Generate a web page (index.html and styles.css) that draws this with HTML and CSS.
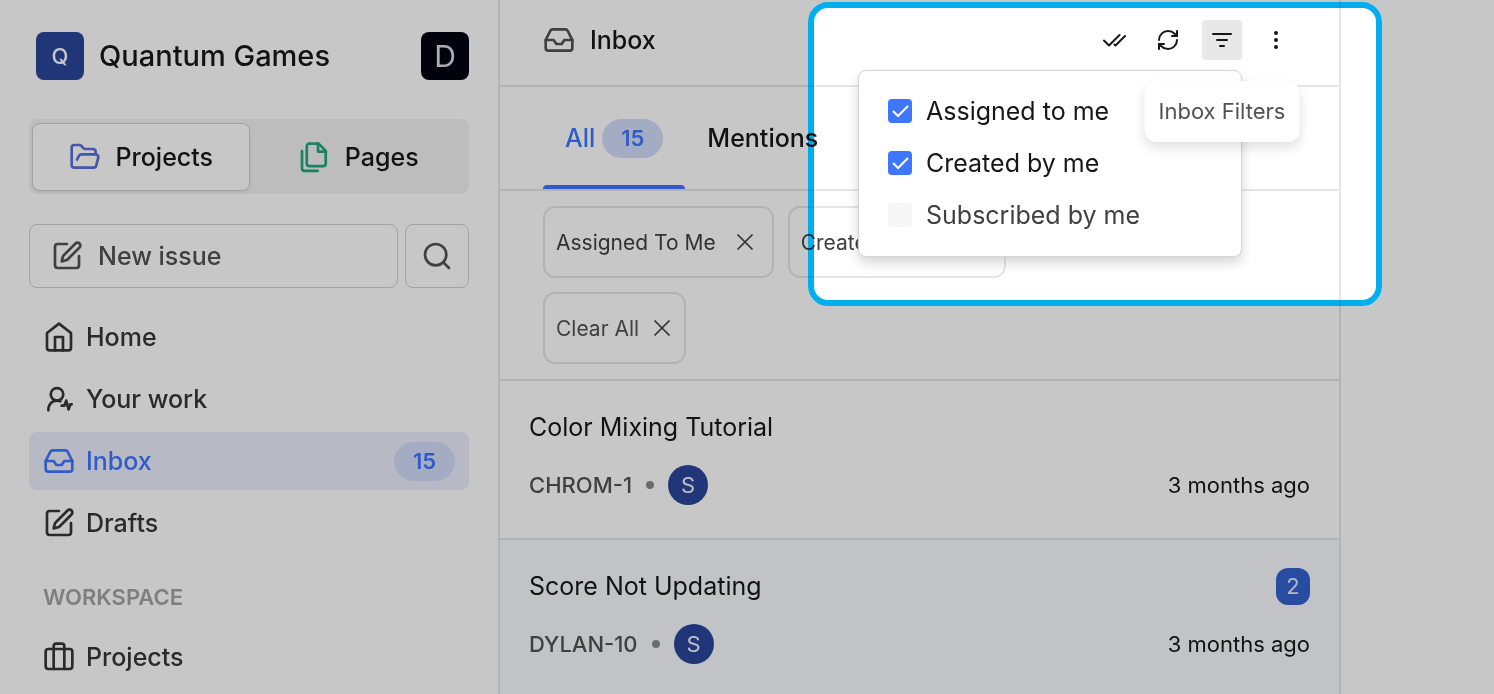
FILE: index.html
```html
<!DOCTYPE html>
<html lang="en">
<head>
<meta charset="utf-8">
<title>Inbox - Quantum Games</title>
<link rel="stylesheet" href="styles.css">
</head>
<body>
<svg class="sprite" aria-hidden="true">
  <symbol id="i-edit" viewBox="0 0 24 24"><path d="M12 3H5a2 2 0 0 0-2 2v14a2 2 0 0 0 2 2h14a2 2 0 0 0 2-2v-7"/><path d="M18.4 2.6a2.1 2.1 0 0 1 3 3L12.6 14.4Q12 15 11.200 15.200L8 16l.8-3.200Q9 12 9.600 11.400z"/></symbol>
  <symbol id="i-inbox" viewBox="0 0 24 24"><path d="M22 12h-6l-2 3h-4l-2-3H2"/><path d="M5.45 5.11 2 12v6a2 2 0 0 0 2 2h16a2 2 0 0 0 2-2v-6l-3.45-6.890A2 2 0 0 0 16.760 4H7.240a2 2 0 0 0-1.790 1.110z"/></symbol>
  <symbol id="i-x" viewBox="0 0 24 24"><path d="M18 6 6 18M6 6l12 12"/></symbol>
</svg>
<div class="app">
  <aside class="sidebar">
    <div class="workspace">
      <span class="logo">Q</span>
      <span class="workspace-name">Quantum Games</span>
      <button class="account" type="button">D</button>
    </div>
    <div class="switcher">
      <button class="switch switch-active" type="button">
        <svg class="icon icon-folder" viewBox="0 0 24 24"><path d="m6 14 1.500-2.900A2 2 0 0 1 9.240 10H20a2 2 0 0 1 1.940 2.500l-1.540 6a2 2 0 0 1-1.950 1.500H4a2 2 0 0 1-2-2V5a2 2 0 0 1 2-2h3.900a2 2 0 0 1 1.690.9l.810 1.200a2 2 0 0 0 1.670.9H18a2 2 0 0 1 2 2v2"/></svg>
        Projects
      </button>
      <button class="switch" type="button">
        <svg class="icon icon-files" viewBox="0 0 24 24"><path d="M15.500 2H8.600a2 2 0 0 0-2 2v12.800a2 2 0 0 0 2 2h10.200a2 2 0 0 0 2-2V7.500z"/><path d="M15 2v6h6"/><path d="M3 7.600v12.800a2 2 0 0 0 2 2h9.800"/></svg>
        Pages
      </button>
    </div>
    <div class="actions">
      <button class="new-issue" type="button"><svg class="icon"><use href="#i-edit"/></svg>New issue</button>
      <button class="search" type="button" aria-label="Search">
        <svg class="icon" viewBox="0 0 24 24"><circle cx="11" cy="11" r="8"/><path d="m21 21-4.300-4.300"/></svg>
      </button>
    </div>
    <nav class="nav">
      <a class="nav-item" href="#home"><svg class="icon" viewBox="0 0 24 24"><path d="m3 9 9-7 9 7v11a2 2 0 0 1-2 2H5a2 2 0 0 1-2-2z"/><path d="M9 22V12h6v10"/></svg>Home</a>
      <a class="nav-item" href="#work"><svg class="icon" viewBox="0 0 24 24"><circle cx="10.500" cy="8.500" r="4.700"/><path d="M4 20.500c0-4.500 2.800-7.300 6.500-7.300 1 0 1.800.2 2.500.5"/><path d="M14 17h2l1.400-3.800 1.800 6.600 1.300-3.800h1"/></svg>Your work</a>
      <a class="nav-item nav-active" href="#inbox"><svg class="icon"><use href="#i-inbox"/></svg>Inbox<span class="count">15</span></a>
      <a class="nav-item" href="#drafts"><svg class="icon"><use href="#i-edit"/></svg>Drafts</a>
    </nav>
    <h2 class="nav-heading">WORKSPACE</h2>
    <nav class="nav">
      <a class="nav-item" href="#projects"><svg class="icon" viewBox="0 0 24 24"><rect x="2" y="6" width="20" height="15" rx="2"/><path d="M8 21V4a2 2 0 0 1 2-2h4a2 2 0 0 1 2 2v17"/></svg>Projects</a>
    </nav>
  </aside>

  <main class="inbox">
    <header class="inbox-header">
      <svg class="icon icon-muted"><use href="#i-inbox"/></svg>
      <h1 class="inbox-title">Inbox</h1>
      <div class="toolbar">
        <button class="tool" type="button" aria-label="Mark all as read"><svg class="tool-icon" viewBox="0 0 24 24"><path d="m2 12.500 5 5L17.500 7M12.500 16.500l1 1L23 8"/></svg></button>
        <button class="tool" type="button" aria-label="Refresh"><svg class="tool-icon" viewBox="0 0 24 24"><path d="M3 12a9 9 0 0 1 9-9 9.750 9.750 0 0 1 6.740 2.740L21 8"/><path d="M21 3v5h-5"/><path d="M21 12a9 9 0 0 1-9 9 9.750 9.750 0 0 1-6.740-2.740L3 16"/><path d="M8 16H3v5"/></svg></button>
        <div class="filter">
          <button class="tool tool-active" type="button" aria-label="Inbox Filters"><svg class="tool-icon" viewBox="0 0 24 24"><path d="M3 6h18M7 12h10M10 18h4"/></svg></button>
          <div class="filter-menu">
            <label class="option"><input class="check" type="checkbox" checked>Assigned to me</label>
            <label class="option"><input class="check" type="checkbox" checked>Created by me</label>
            <label class="option option-off"><input class="check" type="checkbox">Subscribed by me</label>
          </div>
          <span class="tooltip" role="tooltip">Inbox Filters</span>
        </div>
        <button class="tool" type="button" aria-label="More"><svg class="tool-icon tool-dots" viewBox="0 0 24 24"><circle cx="12" cy="5" r="2"/><circle cx="12" cy="12" r="2"/><circle cx="12" cy="19" r="2"/></svg></button>
      </div>
      <div class="spotlight"></div>
    </header>
    <div class="tabs">
      <button class="tab tab-active" type="button">All<span class="count">15</span></button>
      <button class="tab" type="button">Mentions</button>
    </div>
    <div class="chips">
      <button class="chip" type="button">Assigned To Me<svg class="chip-x"><use href="#i-x"/></svg></button>
      <button class="chip" type="button">Created By Me<svg class="chip-x"><use href="#i-x"/></svg></button>
      <button class="chip chip-clear" type="button">Clear All<svg class="chip-x"><use href="#i-x"/></svg></button>
    </div>
    <article class="item">
      <div class="item-row"><h3 class="item-title">Color Mixing Tutorial</h3></div>
      <div class="item-meta"><span class="item-id">CHROM-1</span><span class="dot"></span><span class="avatar">S</span><time class="time">3 months ago</time></div>
    </article>
    <article class="item item-unread">
      <div class="item-row"><h3 class="item-title">Score Not Updating</h3><span class="unread">2</span></div>
      <div class="item-meta"><span class="item-id">DYLAN-10</span><span class="dot"></span><span class="avatar">S</span><time class="time">3 months ago</time></div>
    </article>
  </main>
  <section class="detail"></section>
</div>
</body>
</html>
```
FILE: styles.css
```css
* { box-sizing: border-box; }
body { margin: 0; font-family: Inter, "Liberation Sans", sans-serif; color: #171717; background: #fff; }
h1, h2, h3 { margin: 0; font-weight: inherit; font-size: inherit; }
button { font: inherit; color: inherit; background: none; border: 0; padding: 0; }
a { color: inherit; text-decoration: none; }

.sprite { position: absolute; width: 0; height: 0; }
.app {
  position: relative;
  display: grid;
  grid-template-columns: 500px 1fr 153px;
  min-height: 100vh;
  background: #fff;
  overflow: hidden;
  isolation: isolate;
  font-size: 25px;
}
.icon { width: 32px; height: 32px; flex: none; fill: none; stroke: currentColor; stroke-width: 2; stroke-linecap: round; stroke-linejoin: round; }
.icon-muted { color: #525252; }

/* Sidebar */
.sidebar { padding: 32px 29px 0; border-right: 2px solid #e5e5e5; font-weight: 500; }
.workspace { display: flex; align-items: center; gap: 15px; padding-left: 7px; }
.logo, .account { display: grid; place-items: center; width: 48px; height: 48px; border-radius: 8px; color: #fff; }
.logo { background: #28459a; font-size: 22px; }
.account { margin-left: auto; background: #020210; color: #dcdce4; font-size: 30px; font-weight: 400; }
.workspace-name { font-size: 29px; line-height: 46px; }
.switcher { display: grid; grid-template-columns: 1fr 1fr; margin-top: 39px; padding: 4px 2px 3px 3px; border-radius: 8px; background: #f3f3f3; }
.switch { display: flex; align-items: center; justify-content: center; gap: 15px; height: 68px; border: 1px solid transparent; border-radius: 8px; }
.switch-active { background: #fff; border-color: #d0d0d0; box-shadow: 0 1px 3px rgba(0, 0, 0, .08); }
.icon-folder { color: #5b6ddb; }
.icon-files { color: #1fa67c; }
.actions { display: flex; gap: 7px; margin-top: 30px; color: #525252; }
.new-issue, .search { height: 64px; border: 1px solid #d0d0d0; border-radius: 8px; }
.new-issue { flex: 1; display: flex; align-items: center; gap: 15px; padding-left: 21px; }
.search { width: 64px; display: grid; place-items: center; }
.nav { display: grid; gap: 4px; margin-top: 20px; color: #363636; }
.nav-item { display: flex; align-items: center; gap: 11px; height: 58px; padding: 0 14px; border-radius: 8px; }
.nav-active { background: #ebeffd; color: #3f76ff; }
.count { display: grid; place-items: center; width: 61px; height: 39px; border-radius: 20px; background: #d2dcfb; color: #3f76ff; font-size: 22px; font-weight: 600; }
.nav-item .count { margin-left: auto; }
.nav-heading { margin: 31px 0 0 14px; font-size: 22px; line-height: 28px; font-weight: 600; color: #a3a3a3; }
.nav-heading + .nav { margin-top: 17px; }

/* Inbox column */
.inbox { min-width: 0; border-right: 2px solid #e5e5e5; }
.inbox-header { position: relative; display: flex; align-items: center; gap: 15px; height: 87px; padding: 0 43px 5px; border-bottom: 2px solid #e5e5e5; font-weight: 500; }
.toolbar { display: flex; gap: 14px; margin-left: auto; }
.tool { display: grid; place-items: center; width: 40px; height: 40px; border-radius: 4px; }
.tool-active { background: #e8e8e8; }
.tool-icon { width: 24px; height: 24px; fill: none; stroke: currentColor; stroke-width: 2; stroke-linecap: round; stroke-linejoin: round; }
.tool-dots { fill: currentColor; stroke: none; }
.filter { position: relative; z-index: 1; }
.filter-menu {
  position: absolute; top: 50px; right: 0; width: 384px; padding: 14px 29px 15px;
  background: #fff; border: 1px solid #d4d4d4; border-radius: 8px;
  box-shadow: 0 6px 12px rgba(0, 0, 0, .16); font-weight: 400;
}
.option { display: flex; align-items: center; gap: 14px; height: 52px; white-space: nowrap; }
.option-off { color: #404040; }
.check { appearance: none; flex: none; width: 24px; height: 24px; margin: 0; border-radius: 4px; background: #f6f6f6; }
.check:checked { background: #3f76ff url("data:image/svg+xml,%3Csvg xmlns='http://www.w3.org/2000/svg' viewBox='0 0 24 24' fill='none' stroke='white' stroke-width='2'%3E%3Cpath d='M5 12l5 5L20 7'/%3E%3C/svg%3E"); }
.tooltip {
  position: absolute; top: 61px; left: 50%; transform: translateX(-50%); padding: 16px 14px;
  border-radius: 12px; background: #fff; color: #525252; box-shadow: 0 6px 12px rgba(0, 0, 0, .12);
  font-size: 22px; line-height: 29px; font-weight: 400; white-space: nowrap;
}

/* Highlighted area; its shadow dims the rest of the page */
.spotlight {
  position: absolute; z-index: 2; top: 2px; right: -43px; width: 574px; height: 304px;
  border: 6px solid #00aeef; border-radius: 20px; box-shadow: 0 0 0 3000px rgba(0, 0, 0, .22);
  mix-blend-mode: multiply; pointer-events: none;
}

.tabs { display: flex; height: 104px; padding-left: 43px; border-bottom: 2px solid #e5e5e5; font-weight: 500; }
.tab { position: relative; display: flex; align-items: center; gap: 7px; padding: 0 22px; }
.tab-active { color: #3f76ff; }
.tab-active::after { content: ""; position: absolute; left: 0; right: 0; bottom: 0; height: 4px; border-radius: 4px 4px 0 0; background: #3f76ff; }
.chips { display: flex; flex-wrap: wrap; gap: 14px; padding: 15px 300px 15px 43px; border-bottom: 2px solid #e5e5e5; }
.chip { display: flex; align-items: center; gap: 15px; height: 72px; padding: 0 13px 0 11px; border: 2px solid #e5e5e5; border-radius: 12px; color: #404040; font-size: 21px; white-space: nowrap; }
.chip-clear { gap: 9px; padding-right: 8px; color: #525252; }
.chip-x { width: 28px; height: 28px; fill: none; stroke: #404040; stroke-width: 1.5; stroke-linecap: round; }
.item { padding: 28px 29px 33px; border-bottom: 2px solid #e5e5e5; }
.item-unread { background: #f9fafe; }
.item-row { display: flex; align-items: center; justify-content: space-between; height: 36px; }
.unread { display: grid; place-items: center; width: 34px; height: 37px; border-radius: 12px; background: #3361cf; color: #e4ebff; font-size: 22px; }
.item-meta { display: flex; align-items: center; height: 40px; margin-top: 20px; font-size: 22px; }
.item-id { color: #525252; font-weight: 500; }
.dot { width: 8px; height: 8px; margin: 0 14px; border-radius: 50%; background: #8a8a8a; }
.avatar { display: grid; place-items: center; width: 40px; height: 40px; border-radius: 50%; background: #28459a; color: #f0f4ff; }
.time { margin-left: auto; }
```
